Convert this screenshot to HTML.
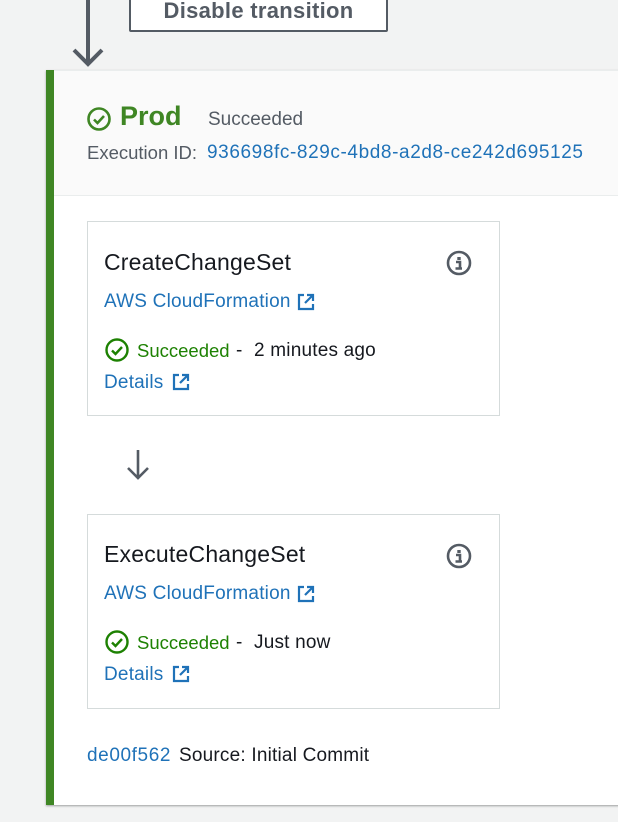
<!DOCTYPE html>
<html><head><meta charset="utf-8"><style>
*{margin:0;padding:0;box-sizing:border-box}
body{width:618px;height:822px;background:#f2f3f3;font-family:"Liberation Sans",sans-serif;position:relative;overflow:hidden}
.abs{position:absolute;white-space:nowrap}
.btn{left:129px;top:-10px;width:259px;height:42px;border:2px solid #545b64;border-radius:2px;background:#fff;color:#545b64;font-weight:bold;font-size:22px;text-align:center;line-height:38px;letter-spacing:.3px}
.panel{left:46px;top:70px;width:580px;height:735px;background:#fff;border-left:8px solid #3f8624;box-shadow:0 1px 2px rgba(0,0,0,.35)}
.head{left:54px;top:70px;width:564px;height:126px;background:#fafafa;border-bottom:1px solid #eaeded;border-top:1px solid #eaeded}
.card{width:413px;height:195px;border:1px solid #d5dbdb;background:#fff}
.t{font-size:23px;color:#16191f;letter-spacing:.2px}
.link{color:#1f72b8;font-size:19px;letter-spacing:.2px}
.ok{color:#1d8102;font-size:18.5px}
.blk{color:#16191f;font-size:19px;letter-spacing:.2px}
</style></head><body>
<svg class="abs" style="left:70px;top:0" width="36" height="70"><path d="M18 0V64M4 50L18 64L32 50" stroke="#545b64" stroke-width="4" fill="none"/></svg>
<div class="abs btn">Disable transition</div>
<div class="abs panel"></div>
<div class="abs head"></div>
<svg class="abs" style="left:86px;top:106px" width="26" height="26"><circle cx="13" cy="13" r="10.5" stroke="#3f8624" stroke-width="2.6" fill="none"/><path d="M8 13.5L11.5 17L18 10" stroke="#3f8624" stroke-width="2.6" fill="none"/></svg>
<div class="abs" style="left:120px;top:101px;font-size:27px;font-weight:bold;color:#3f8624">Prod</div>
<div class="abs" style="left:208px;top:109px;font-size:19px;color:#545b64">Succeeded</div>
<div class="abs" style="left:87px;top:142px;font-size:18.5px;color:#545b64">Execution ID:</div>
<div class="abs link" style="left:207px;top:142px;letter-spacing:.6px">936698fc-829c-4bd8-a2d8-ce242d695125</div>

<div class="abs card" style="left:87px;top:221px"></div>
<div class="abs t" style="left:104px;top:249px">CreateChangeSet</div>
<svg class="abs" style="left:445px;top:249px" width="28" height="28"><circle cx="14" cy="14" r="11" stroke="#545b64" stroke-width="2.6" fill="none"/><rect x="12.3" y="8" width="3.4" height="3" fill="#545b64"/><path d="M11 13H15V19M10.5 19.5H17" stroke="#545b64" stroke-width="2.6" fill="none"/></svg>
<div class="abs link" style="left:104px;top:291px">AWS CloudFormation</div>
<svg class="abs" style="left:297px;top:293px" width="18" height="18"><path d="M7 2H2V16H16V11M10 2H16V8M16 2L8 10" stroke="#1f72b8" stroke-width="2.2" fill="none"/></svg>
<svg class="abs" style="left:104px;top:337px" width="26" height="26"><circle cx="13" cy="13" r="10.5" stroke="#1d8102" stroke-width="2.4" fill="none"/><path d="M8 13.5L11.5 17L18 10" stroke="#1d8102" stroke-width="2.4" fill="none"/></svg>
<div class="abs ok" style="left:137px;top:340px">Succeeded</div>
<div class="abs blk" style="left:236px;top:340px">-</div>
<div class="abs blk" style="left:254px;top:340px">2 minutes ago</div>
<div class="abs link" style="left:104px;top:372px">Details</div>
<svg class="abs" style="left:172px;top:373px" width="18" height="18"><path d="M7 2H2V16H16V11M10 2H16V8M16 2L8 10" stroke="#1f72b8" stroke-width="2.2" fill="none"/></svg>

<svg class="abs" style="left:124px;top:449px" width="28" height="32"><path d="M14 1V29M4 19L14 29L24 19" stroke="#545b64" stroke-width="2.6" fill="none"/></svg>

<div class="abs card" style="left:87px;top:514px"></div>
<div class="abs t" style="left:104px;top:541px">ExecuteChangeSet</div>
<svg class="abs" style="left:445px;top:542px" width="28" height="28"><circle cx="14" cy="14" r="11" stroke="#545b64" stroke-width="2.6" fill="none"/><rect x="12.3" y="8" width="3.4" height="3" fill="#545b64"/><path d="M11 13H15V19M10.5 19.5H17" stroke="#545b64" stroke-width="2.6" fill="none"/></svg>
<div class="abs link" style="left:104px;top:583px">AWS CloudFormation</div>
<svg class="abs" style="left:297px;top:585px" width="18" height="18"><path d="M7 2H2V16H16V11M10 2H16V8M16 2L8 10" stroke="#1f72b8" stroke-width="2.2" fill="none"/></svg>
<svg class="abs" style="left:104px;top:629px" width="26" height="26"><circle cx="13" cy="13" r="10.5" stroke="#1d8102" stroke-width="2.4" fill="none"/><path d="M8 13.5L11.5 17L18 10" stroke="#1d8102" stroke-width="2.4" fill="none"/></svg>
<div class="abs ok" style="left:137px;top:632px">Succeeded</div>
<div class="abs blk" style="left:236px;top:632px">-</div>
<div class="abs blk" style="left:254px;top:632px">Just now</div>
<div class="abs link" style="left:104px;top:664px">Details</div>
<svg class="abs" style="left:172px;top:665px" width="18" height="18"><path d="M7 2H2V16H16V11M10 2H16V8M16 2L8 10" stroke="#1f72b8" stroke-width="2.2" fill="none"/></svg>

<div class="abs link" style="left:87px;top:745px;letter-spacing:.6px">de00f562</div>
<div class="abs blk" style="left:179px;top:745px">Source: Initial Commit</div>
</body></html>
